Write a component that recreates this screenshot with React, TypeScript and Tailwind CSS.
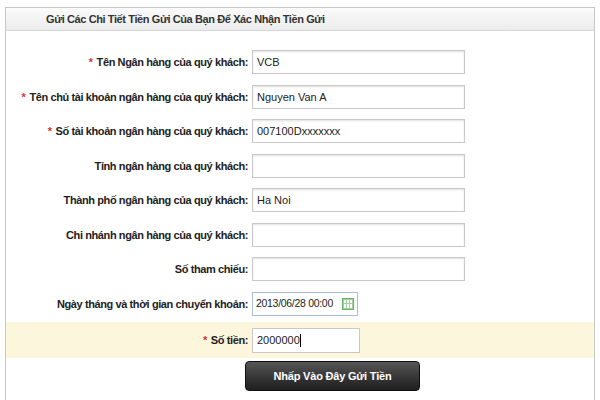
import React from 'react';

const rows = [
  { label: 'Tên Ngân hàng của quý khách:', value: 'VCB', req: true },
  { label: 'Tên chủ tài khoản ngân hàng của quý khách:', value: 'Nguyen Van A', req: true },
  { label: 'Số tài khoản ngân hàng của quý khách:', value: '007100Dxxxxxxx', req: true },
  { label: 'Tỉnh ngân hàng của quý khách:', value: '', req: false },
  { label: 'Thành phố ngân hàng của quý khách:', value: 'Ha Noi', req: false },
  { label: 'Chi nhánh ngân hàng của quý khách:', value: '', req: false },
  { label: 'Số tham chiếu:', value: '', req: false },
];

const Label = ({ text, req }: { text: string; req: boolean }) => (
  <div className="w-[246px] pr-[4px] text-right text-[11px] font-bold tracking-[-0.4px] text-[#222] whitespace-nowrap">
    {req && <span className="text-[#d33] mr-1">*</span>}
    {text}
  </div>
);

const App = () => {
  return (
    <div className="w-[600px] h-[400px] bg-white pt-[7px] px-[5px] overflow-hidden" style={{ fontFamily: '"Liberation Sans", Arial, sans-serif' }}>
      <div className="border border-[#c8c8c8] h-[400px]">
        <div className="h-[23px] bg-gradient-to-b from-[#fbfbfb] to-[#ececec] border-b border-[#d8d8d8] pl-[40px] flex items-center text-[11px] font-bold tracking-[-0.4px] text-[#333]">
          Gửi Các Chi Tiết Tiền Gửi Của Bạn Để Xác Nhận Tiền Gửi
        </div>
        <div className="pt-[14px]">
          {rows.map((r, i) => (
            <div key={i} className="h-[34.5px] flex items-center">
              <Label text={r.label} req={r.req} />
              <div className="w-[213px] h-[24px] border border-[#c9c9c9] bg-white shadow-[inset_0_1px_2px_rgba(0,0,0,0.12)] px-[4px] flex items-center text-[11px] text-[#222]">
                {r.value}
              </div>
            </div>
          ))}
          <div className="h-[34.5px] flex items-center">
            <Label text="Ngày tháng và thời gian chuyển khoản:" req={false} />
            <div className="w-[106px] h-[24px] border border-[#a9bfd6] bg-white px-[3px] flex items-center justify-between text-[10.5px] tracking-[-0.3px] text-[#222] whitespace-nowrap">
              2013/06/28 00:00
              <span className="w-[12px] h-[12px] bg-[#9fd39a] border border-[#6bb26a] grid grid-cols-3 gap-[1px] p-[1px]">
                <span className="bg-white" /><span className="bg-white" /><span className="bg-white" />
                <span className="bg-white" /><span className="bg-white" /><span className="bg-white" />
              </span>
            </div>
          </div>
          <div className="h-[36px] mt-[1px] flex items-center bg-[#fbf6dc]">
            <Label text="Số tiền:" req={true} />
            <div className="w-[108px] h-[25px] border border-[#c9c9c9] bg-white px-[4px] flex items-center text-[11px] text-[#222]">
              2000000<span className="w-px h-[13px] bg-black" />
            </div>
          </div>
          <div className="flex pl-[239px] pt-[3px]">
            <button className="w-[175px] h-[30px] rounded-[4px] bg-gradient-to-b from-[#555] to-[#1f1f1f] border border-[#111] text-white text-[11px] font-bold tracking-[-0.2px]">
              Nhấp Vào Đây Gửi Tiền
            </button>
          </div>
        </div>
      </div>
    </div>
  );
};

export default App;
